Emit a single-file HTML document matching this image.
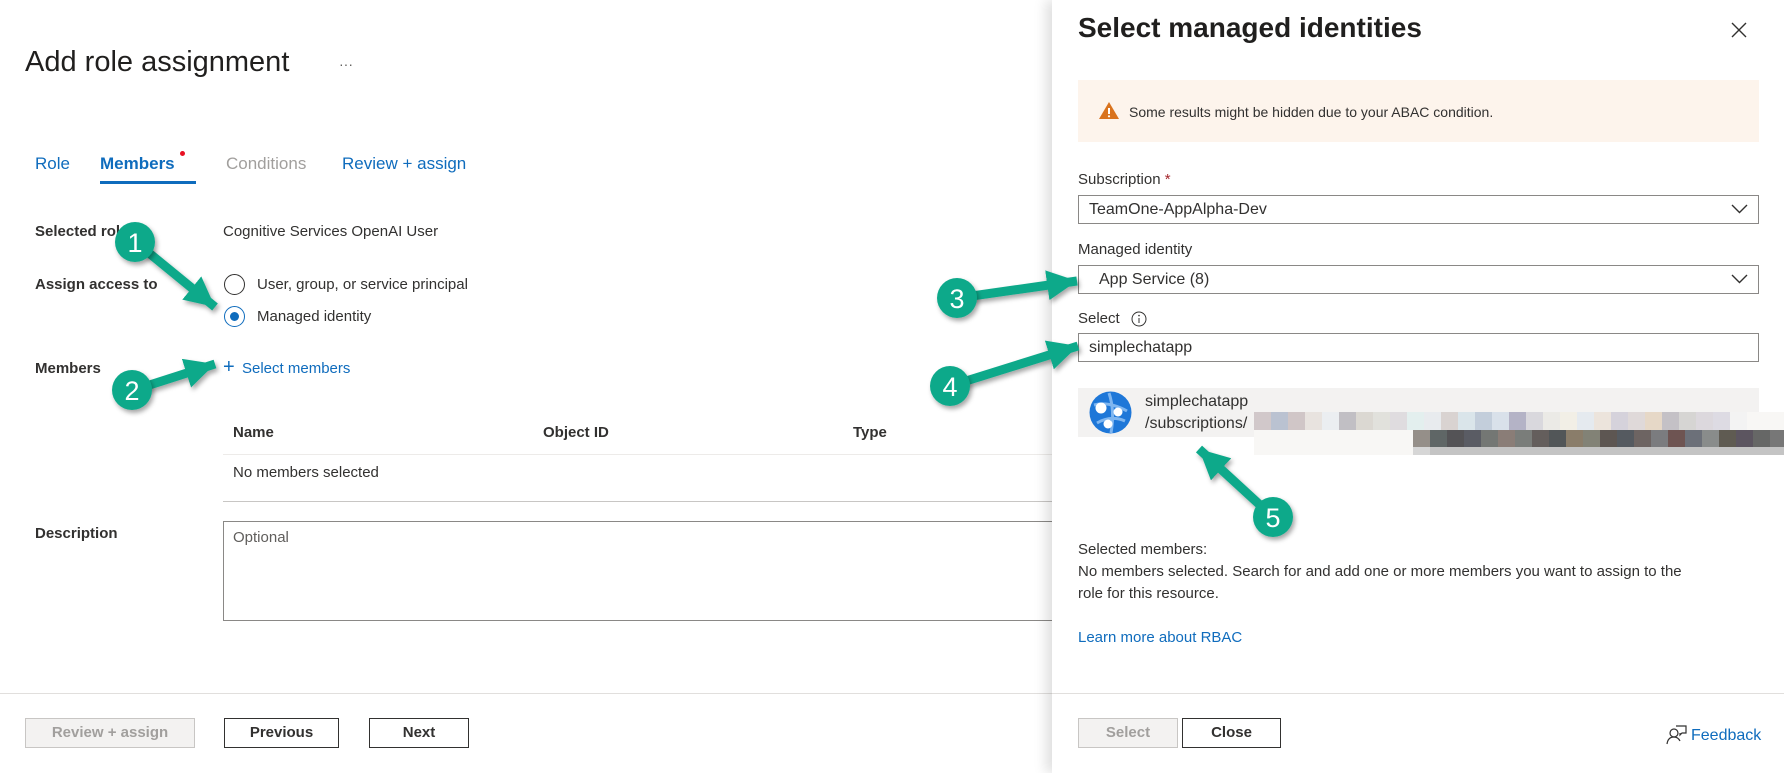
<!DOCTYPE html>
<html><head><meta charset="utf-8"><style>
*{box-sizing:border-box;margin:0;padding:0}
body{width:1784px;height:773px;overflow:hidden;background:#fff;font-family:"Liberation Sans",sans-serif;color:#323130;position:relative;font-size:15px}
.a{position:absolute;white-space:nowrap}
.b{font-weight:bold}
.lnk{color:#0f6cbd}
.btn{position:absolute;border:1px solid #323130;background:#fff;text-align:center;font-weight:bold;font-size:15px;line-height:27px;height:30px}
.dis{border-color:#c8c6c4;background:#f3f2f1;color:#a19f9d}
.inp{position:absolute;left:1078px;width:681px;border:1px solid #8a8886;height:29px;line-height:27px;padding-left:10px;font-size:16px}
.chev{position:absolute;right:10px;top:8px}
</style></head><body>
<div class="a" style="left:25px;top:46px;font-size:29px;color:#201f1e">Add role assignment</div>
<div class="a" style="left:339px;top:56px;font-size:14px;color:#605e5c">···</div>
<div class="a lnk" style="left:35px;top:154px;font-size:17px">Role</div>
<div class="a lnk" style="left:100px;top:154px;font-size:17px;font-weight:bold;color:#0f6cbd">Members</div>
<div class="a" style="left:180px;top:151px;width:5px;height:5px;border-radius:50%;background:#e81123"></div>
<div class="a" style="left:100px;top:181px;width:96px;height:3px;background:#0f6cbd"></div>
<div class="a" style="left:226px;top:154px;font-size:17px;color:#a19f9d">Conditions</div>
<div class="a lnk" style="left:342px;top:154px;font-size:17px">Review + assign</div>
<div class="a b" style="left:35px;top:223px">Selected role</div>
<div class="a" style="left:223px;top:223px">Cognitive Services OpenAI User</div>
<div class="a b" style="left:35px;top:276px">Assign access to</div>
<div class="a" style="left:224px;top:274px;width:21px;height:21px;border:1px solid #323130;border-radius:50%"></div>
<div class="a" style="left:257px;top:276px">User, group, or service principal</div>
<div class="a" style="left:224px;top:306px;width:21px;height:21px;border:1px solid #0f6cbd;border-radius:50%"></div>
<div class="a" style="left:230px;top:312px;width:9px;height:9px;background:#0f6cbd;border-radius:50%"></div>
<div class="a" style="left:257px;top:308px">Managed identity</div>
<div class="a b" style="left:35px;top:360px">Members</div>
<div class="a lnk" style="left:223px;top:356px;font-size:20px">+</div>
<div class="a lnk" style="left:242px;top:360px">Select members</div>
<div class="a b" style="left:233px;top:424px">Name</div>
<div class="a b" style="left:543px;top:424px">Object ID</div>
<div class="a b" style="left:853px;top:424px">Type</div>
<div class="a" style="left:223px;top:454px;width:840px;height:1px;background:#edebe9"></div>
<div class="a" style="left:233px;top:464px">No members selected</div>
<div class="a" style="left:223px;top:501px;width:840px;height:1px;background:#c8c6c4"></div>
<div class="a b" style="left:35px;top:525px">Description</div>
<div class="a" style="left:223px;top:521px;width:840px;height:100px;border:1px solid #8a8886"></div>
<div class="a" style="left:233px;top:529px;color:#605e5c">Optional</div>
<div class="a" style="left:0;top:693px;width:1060px;height:1px;background:#e1dfdd"></div>
<div class="btn dis" style="left:25px;top:718px;width:170px">Review + assign</div>
<div class="btn" style="left:224px;top:718px;width:115px">Previous</div>
<div class="btn" style="left:369px;top:718px;width:100px">Next</div>

<div class="a" style="left:1052px;top:0;width:732px;height:773px;background:#fff;box-shadow:-6px 0 12px rgba(0,0,0,.13)"></div>
<div class="a" style="left:1078px;top:12px;font-size:28px;font-weight:bold;color:#201f1e">Select managed identities</div>
<svg class="a" style="left:1731px;top:22px" width="16" height="16"><path d="M1 1L15 15M15 1L1 15" stroke="#323130" stroke-width="1.4"/></svg>
<div class="a" style="left:1078px;top:80px;width:681px;height:62px;background:#fdf4ec"></div>
<svg class="a" style="left:1098px;top:101px" width="22" height="19"><path d="M11 1L21 18H1Z" fill="#d9731e"/><path d="M11 7v6" stroke="#fff" stroke-width="2"/><circle cx="11" cy="15.3" r="1.1" fill="#fff"/></svg>
<div class="a" style="left:1129px;top:104px;font-size:14px">Some results might be hidden due to your ABAC condition.</div>
<div class="a" style="left:1078px;top:171px">Subscription <span style="color:#a4262c">*</span></div>
<div class="inp" style="top:195px">TeamOne-AppAlpha-Dev<svg class="chev" width="17" height="10"><path d="M1 1L8.5 8.5L16 1" fill="none" stroke="#323130" stroke-width="1.4"/></svg></div>
<div class="a" style="left:1078px;top:241px">Managed identity</div>
<div class="inp" style="top:265px;padding-left:20px">App Service (8)<svg class="chev" width="17" height="10"><path d="M1 1L8.5 8.5L16 1" fill="none" stroke="#323130" stroke-width="1.4"/></svg></div>
<div class="a" style="left:1078px;top:310px">Select</div>
<svg class="a" style="left:1131px;top:311px" width="16" height="16"><circle cx="8" cy="8" r="7" fill="none" stroke="#323130"/><path d="M8 7v5" stroke="#323130"/><circle cx="8" cy="4.6" r=".8" fill="#323130"/></svg>
<div class="inp" style="top:333px">simplechatapp</div>
<div class="a" style="left:1078px;top:388px;width:681px;height:49px;background:#f3f2f1"></div>
<svg class="a" style="left:1089px;top:391px" width="43" height="43"><circle cx="21.5" cy="21.5" r="21" fill="#1e77d8"/><path d="M5 14Q20 10 38 20M8 32Q22 24 36 30M20 2Q26 20 22 42" stroke="#7fb6f0" stroke-width="3" fill="none"/><circle cx="12" cy="17" r="5.5" fill="#fff"/><circle cx="29" cy="21" r="4.5" fill="#fff"/><circle cx="19" cy="33" r="4.5" fill="#fff"/></svg>
<div class="a" style="left:1145px;top:393px;font-size:16px">simplechatapp</div>
<div class="a" style="left:1145px;top:415px;font-size:16px">/subscriptions/</div>
<div class="a" style="left:1254px;top:412px;width:530px;height:43px;background:#f8f7f5"></div>
<div class="a" style="left:1254px;top:412px;display:flex;height:18px">
<i style="width:17px;background:#d1c8ca"></i><i style="width:17px;background:#bac2d1"></i><i style="width:17px;background:#d0c6c7"></i><i style="width:17px;background:#e8e3df"></i><i style="width:17px;background:#ebeef1"></i><i style="width:17px;background:#c1bfc4"></i><i style="width:17px;background:#dbd8d2"></i><i style="width:17px;background:#e1e1dc"></i><i style="width:17px;background:#dfdcdf"></i><i style="width:17px;background:#e3efee"></i><i style="width:17px;background:#e8ebee"></i><i style="width:17px;background:#d9d3d1"></i><i style="width:17px;background:#dae5ea"></i><i style="width:17px;background:#c3cedb"></i><i style="width:17px;background:#d9e1ea"></i><i style="width:17px;background:#b4b3c6"></i><i style="width:17px;background:#d9d8dd"></i><i style="width:17px;background:#ebeae6"></i><i style="width:17px;background:#f2efe6"></i><i style="width:17px;background:#e5eaef"></i><i style="width:17px;background:#ece4dc"></i><i style="width:17px;background:#d5d2db"></i><i style="width:17px;background:#dfd9d9"></i><i style="width:17px;background:#e6d8c7"></i><i style="width:17px;background:#c4c1c6"></i><i style="width:17px;background:#d6d5d3"></i><i style="width:17px;background:#dcd8dd"></i><i style="width:17px;background:#dddbe3"></i><i style="width:17px;background:#f3f3f3"></i></div>
<div class="a" style="left:1413px;top:430px;display:flex;height:17px">
<i style="width:17px;background:#958f89"></i><i style="width:17px;background:#5f6666"></i><i style="width:17px;background:#545356"></i><i style="width:17px;background:#5a5c64"></i><i style="width:17px;background:#747774"></i><i style="width:17px;background:#8a7d77"></i><i style="width:17px;background:#7a7d7a"></i><i style="width:17px;background:#645e5c"></i><i style="width:17px;background:#525658"></i><i style="width:17px;background:#8a7d6a"></i><i style="width:17px;background:#828276"></i><i style="width:17px;background:#5d5652"></i><i style="width:17px;background:#555a60"></i><i style="width:17px;background:#6d6462"></i><i style="width:17px;background:#7b7c7f"></i><i style="width:17px;background:#6e5452"></i><i style="width:17px;background:#6c7079"></i><i style="width:17px;background:#898c8b"></i><i style="width:17px;background:#5f5b52"></i><i style="width:17px;background:#5c5560"></i><i style="width:17px;background:#666766"></i><i style="width:17px;background:#777"></i></div>
<div class="a" style="left:1413px;top:447px;width:371px;height:8px;background:#c4c4c4"></div>
<div class="a" style="left:1413px;top:447px;width:17px;height:8px;background:#d6d6d6"></div>
<div class="a" style="left:1078px;top:541px;font-size:15px">Selected members:</div>
<div class="a" style="left:1078px;top:563px;font-size:15px">No members selected. Search for and add one or more members you want to assign to the</div>
<div class="a" style="left:1078px;top:585px;font-size:15px">role for this resource.</div>
<div class="a lnk" style="left:1078px;top:629px;font-size:15px">Learn more about RBAC</div>
<div class="a" style="left:1052px;top:693px;width:732px;height:1px;background:#e1dfdd"></div>
<div class="btn dis" style="left:1078px;top:718px;width:100px">Select</div>
<div class="btn" style="left:1182px;top:718px;width:99px">Close</div>
<svg class="a" style="left:1666px;top:724px" width="22" height="22"><circle cx="8" cy="9" r="4" fill="none" stroke="#323130" stroke-width="1.2"/><path d="M1 20Q2 13 8 13Q12 13 14 17M10 2H20V9H16L14 11V9" fill="none" stroke="#323130" stroke-width="1.2"/></svg>
<div class="a lnk" style="left:1691px;top:727px;font-size:16px">Feedback</div>

<svg class="a" style="left:0;top:0" width="1784" height="773">
<defs><filter id="s" x="-50%" y="-50%" width="200%" height="200%"><feDropShadow dx="2" dy="3" stdDeviation="2.5" flood-opacity=".35"/></filter>
<marker id="h" markerUnits="userSpaceOnUse" markerWidth="32" markerHeight="32" refX="30" refY="15" orient="auto"><path d="M0 0L30 15L0 30Z" fill="#11a98a"/></marker></defs>
<g stroke="#11a98a" stroke-width="9" filter="url(#s)" fill="#11a98a">
<line x1="138" y1="244" x2="215" y2="307" marker-end="url(#h)"/>
<line x1="134" y1="390" x2="215" y2="364" marker-end="url(#h)"/>
<line x1="958" y1="298" x2="1077" y2="281" marker-end="url(#h)"/>
<line x1="950" y1="386" x2="1078" y2="346" marker-end="url(#h)"/>
<line x1="1273" y1="517" x2="1199" y2="449" marker-end="url(#h)"/>
</g>
<g fill="#11a98a" filter="url(#s)">
<circle cx="135" cy="242" r="20"/><circle cx="132" cy="390" r="20"/><circle cx="957" cy="298" r="20"/><circle cx="950" cy="386" r="20"/><circle cx="1273" cy="517" r="20"/>
</g>
<g fill="#fff" font-family="Liberation Sans,sans-serif" font-size="27" text-anchor="middle">
<text x="135" y="252">1</text><text x="132" y="400">2</text><text x="957" y="308">3</text><text x="950" y="396">4</text><text x="1273" y="527">5</text></g>
</svg>
</body></html>
